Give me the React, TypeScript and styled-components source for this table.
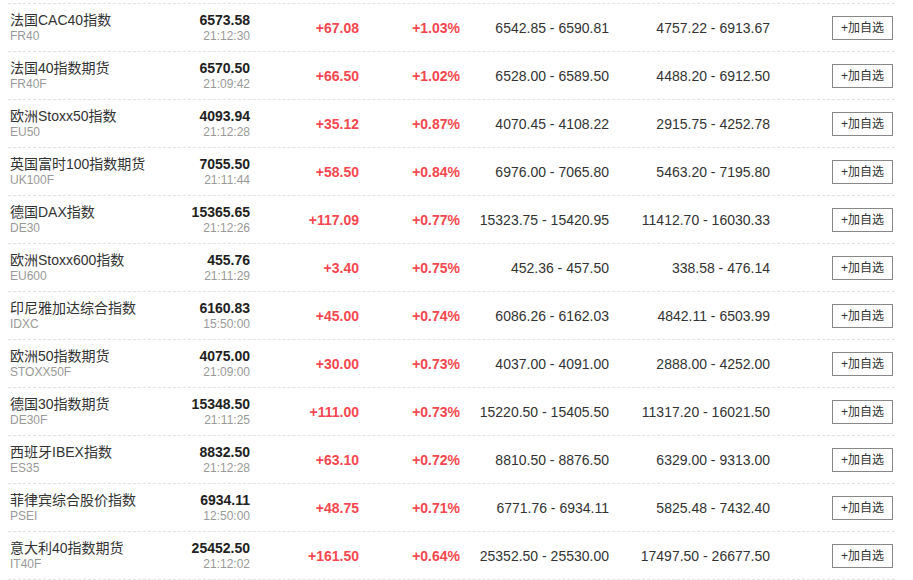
import styled, { createGlobalStyle } from 'styled-components';

const colors = { text: '#333', sub: '#999', up: '#f5474f', line: '#e2e2e2', btn: '#888' };

const rows = [
	['法国CAC40指数', 'FR40', '6573.58', '21:12:30', '+67.08', '+1.03%', '6542.85 - 6590.81', '4757.22 - 6913.67'],
	['法国40指数期货', 'FR40F', '6570.50', '21:09:42', '+66.50', '+1.02%', '6528.00 - 6589.50', '4488.20 - 6912.50'],
	['欧洲Stoxx50指数', 'EU50', '4093.94', '21:12:28', '+35.12', '+0.87%', '4070.45 - 4108.22', '2915.75 - 4252.78'],
	['英国富时100指数期货', 'UK100F', '7055.50', '21:11:44', '+58.50', '+0.84%', '6976.00 - 7065.80', '5463.20 - 7195.80'],
	['德国DAX指数', 'DE30', '15365.65', '21:12:26', '+117.09', '+0.77%', '15323.75 - 15420.95', '11412.70 - 16030.33'],
	['欧洲Stoxx600指数', 'EU600', '455.76', '21:11:29', '+3.40', '+0.75%', '452.36 - 457.50', '338.58 - 476.14'],
	['印尼雅加达综合指数', 'IDXC', '6160.83', '15:50:00', '+45.00', '+0.74%', '6086.26 - 6162.03', '4842.11 - 6503.99'],
	['欧洲50指数期货', 'STOXX50F', '4075.00', '21:09:00', '+30.00', '+0.73%', '4037.00 - 4091.00', '2888.00 - 4252.00'],
	['德国30指数期货', 'DE30F', '15348.50', '21:11:25', '+111.00', '+0.73%', '15220.50 - 15405.50', '11317.20 - 16021.50'],
	['西班牙IBEX指数', 'ES35', '8832.50', '21:12:28', '+63.10', '+0.72%', '8810.50 - 8876.50', '6329.00 - 9313.00'],
	['菲律宾综合股价指数', 'PSEI', '6934.11', '12:50:00', '+48.75', '+0.71%', '6771.76 - 6934.11', '5825.48 - 7432.40'],
	['意大利40指数期货', 'IT40F', '25452.50', '21:12:02', '+161.50', '+0.64%', '25352.50 - 25530.00', '17497.50 - 26677.50'],
];

const GlobalStyle = createGlobalStyle`
	body {
		margin: 0;
		background: #fff;
		font-family: "Liberation Sans", Arial, "Noto Sans CJK SC", sans-serif;
		color: ${colors.text};
	}
`;

const List = styled.div`
	width: 887px;
	padding: 3px 0 0 8px;
`;

const Row = styled.div`
	display: grid;
	grid-template-columns: 150px 92px 109px 101px 149px 161px 1fr;
	align-items: center;
	height: 47px;
	border-top: 1px dashed ${colors.line};
	&:last-child {
		border-bottom: 1px dashed ${colors.line};
	}
`;

const Stack = styled.div<{ $right?: boolean }>`
	display: flex;
	flex-direction: column;
	align-items: ${p => (p.$right ? 'flex-end' : 'flex-start')};
	padding-left: ${p => (p.$right ? 0 : 2)}px;
	line-height: 16px;
`;

const Name = styled.span`
	font-size: 14px;
	white-space: nowrap;
`;

const Price = styled.span`
	font-size: 14px;
	font-weight: bold;
	color: #222;
`;

const Sub = styled.span`
	font-size: 12px;
	color: ${colors.sub};
`;

const Cell = styled.div<{ $up?: boolean }>`
	text-align: right;
	font-size: 14px;
	font-weight: ${p => (p.$up ? 'bold' : 'normal')};
	color: ${p => (p.$up ? colors.up : colors.text)};
	white-space: nowrap;
`;

const AddButton = styled.button`
	justify-self: end;
	margin-right: 2px;
	height: 24px;
	padding: 0 8px;
	border: 1px solid ${colors.btn};
	background: #fff;
	color: ${colors.text};
	font-family: inherit;
	font-size: 12px;
	line-height: 22px;
	cursor: pointer;
`;

export default function App() {
	return (
		<>
			<GlobalStyle />
			<List>
				{rows.map(r => (
					<Row key={r[1]}>
						<Stack>
							<Name>{r[0]}</Name>
							<Sub>{r[1]}</Sub>
						</Stack>
						<Stack $right>
							<Price>{r[2]}</Price>
							<Sub>{r[3]}</Sub>
						</Stack>
						<Cell $up>{r[4]}</Cell>
						<Cell $up>{r[5]}</Cell>
						<Cell>{r[6]}</Cell>
						<Cell>{r[7]}</Cell>
						<AddButton>+加自选</AddButton>
					</Row>
				))}
			</List>
		</>
	);
}
